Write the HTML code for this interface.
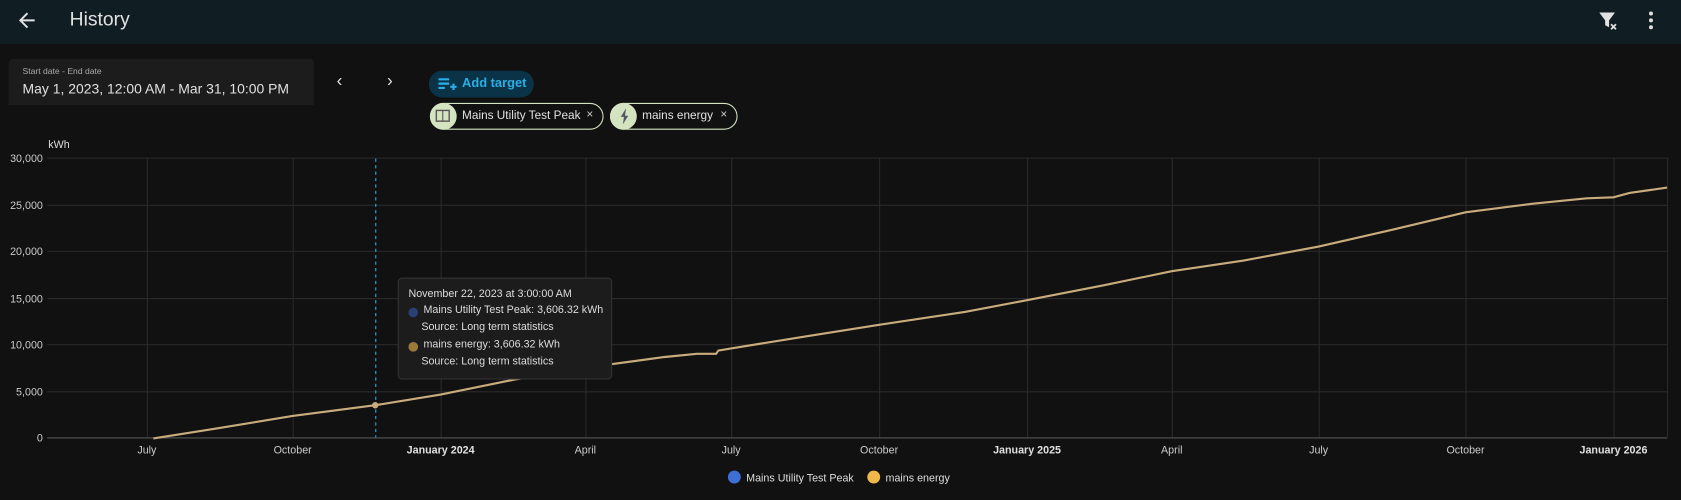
<!DOCTYPE html>
<html><head><meta charset="utf-8"><style>
html,body{margin:0;width:1681px;height:500px;background:#111111;overflow:hidden}
#w{position:absolute;left:0;top:0;width:1568px;height:466px;transform:scale(1.07207);transform-origin:0 0;font-family:"Liberation Sans",sans-serif;color:#e1e1e1}
.top{position:absolute;left:0;top:0;width:1568px;height:41px;background:#101e24}
.t{position:absolute;font-size:18px;color:#e1e1e1}
.abs{position:absolute}
.chip{position:absolute;height:25px;border:1px solid #d4e4c0;border-radius:14px;font-size:11px;color:#e1e1e1;box-sizing:border-box}
.chip .ic{position:absolute;left:-1px;top:-1px;width:25px;height:25px;border-radius:13px;background:#d4e4c0}
</style></head><body><div id="w">
<div class="top"></div>
<svg class="abs" style="left:14px;top:8px" width="22" height="22" viewBox="0 0 24 24"><path d="M20 11H7.8l5.6-5.6L12 4l-8 8 8 8 1.4-1.4L7.8 13H20z" fill="#e1e1e1"/></svg>
<div class="t" style="left:65px;top:8px">History</div>
<svg class="abs" style="left:1489px;top:8px" width="22" height="22" viewBox="0 0 24 24"><path d="M3 4h16l-6 8v7l-4-2v-5z" fill="#e1e1e1"/><path d="M15 16l5 5M20 16l-5 5" stroke="#e1e1e1" stroke-width="1.8"/></svg>
<svg class="abs" style="left:1529px;top:8px" width="22" height="22" viewBox="0 0 24 24"><circle cx="12" cy="5" r="2" fill="#e1e1e1"/><circle cx="12" cy="12" r="2" fill="#e1e1e1"/><circle cx="12" cy="19" r="2" fill="#e1e1e1"/></svg>
<div class="abs" style="left:8px;top:55px;width:285px;height:43px;background:#1c1c1c;border-radius:4px 4px 0 0"></div>
<div class="abs" style="left:21px;top:62px;font-size:8px;color:#aaa">Start date - End date</div>
<div class="abs" style="left:21px;top:75px;font-size:13px;color:#e1e1e1">May 1, 2023, 12:00 AM - Mar 31, 10:00 PM</div>
<div class="abs" style="left:314px;top:67px;font-size:16px;color:#e1e1e1">‹</div>
<div class="abs" style="left:361px;top:67px;font-size:16px;color:#e1e1e1">›</div>
<div class="abs" style="left:400px;top:66px;width:98px;height:25px;border-radius:13px;background:#0b3347"></div>
<svg class="abs" style="left:408px;top:71px" width="18" height="16" viewBox="0 0 18 16"><path d="M1 3h10M1 7h10M1 11h6M12 10h6M15 7v6" stroke="#2aaee6" stroke-width="2"/></svg>
<div class="abs" style="left:431px;top:70px;font-size:12px;font-weight:bold;color:#2aaee6">Add target</div>
<div class="chip" style="left:401px;top:96px;width:162px"><div class="ic"></div><div class="abs" style="left:29px;top:5px">Mains Utility Test Peak</div><div class="abs" style="left:145px;top:4px;color:#ccc">×</div></div>
<svg class="abs" style="left:406px;top:102px" width="14" height="12"><rect x="1" y="1" width="12" height="10" fill="none" stroke="#555" stroke-width="1.3"/><path d="M7 1v10" stroke="#555"/></svg>
<div class="chip" style="left:569px;top:96px;width:119px"><div class="ic"></div><div class="abs" style="left:29px;top:5px">mains energy</div><div class="abs" style="left:102px;top:4px;color:#ccc">×</div></div>
<svg class="abs" style="left:577px;top:101px" width="12" height="15" viewBox="0 0 12 15"><path d="M7 0L2 8h3l-1 7 5-8H6z" fill="#556"/></svg>
<div class="abs" style="left:45px;top:130px;font-size:10px;color:#ddd">kWh</div>
<svg class="abs" style="left:0;top:0" width="1568" height="466">
<g stroke="#2a2a2a" stroke-width="1">
<line x1="44" x2="1555" y1="147.5" y2="147.5"/><line x1="44" x2="1555" y1="191.5" y2="191.5"/><line x1="44" x2="1555" y1="234.5" y2="234.5"/><line x1="44" x2="1555" y1="278.5" y2="278.5"/><line x1="44" x2="1555" y1="321.5" y2="321.5"/><line x1="44" x2="1555" y1="365.5" y2="365.5"/>
<line x1="137.5" x2="137.5" y1="147" y2="408"/><line x1="273.5" x2="273.5" y1="147" y2="408"/><line x1="411.5" x2="411.5" y1="147" y2="408"/><line x1="546.5" x2="546.5" y1="147" y2="408"/><line x1="682.5" x2="682.5" y1="147" y2="408"/><line x1="820.5" x2="820.5" y1="147" y2="408"/><line x1="958.5" x2="958.5" y1="147" y2="408"/><line x1="1093.5" x2="1093.5" y1="147" y2="408"/><line x1="1230.5" x2="1230.5" y1="147" y2="408"/><line x1="1367.5" x2="1367.5" y1="147" y2="408"/><line x1="1505.5" x2="1505.5" y1="147" y2="408"/><line x1="1555.5" x2="1555.5" y1="147" y2="408"/>
</g>
<line x1="44" x2="1555" y1="408.5" y2="408.5" stroke="#555"/>
<line x1="350.5" x2="350.5" y1="148" y2="408" stroke="#2aaee6" stroke-dasharray="3,3"/>
<polyline fill="none" stroke="#c9ac7c" stroke-width="2" points="143,409 200,400 273,388 350,378 411,368 480,354 546,343 620,333 650,330 668,330 670,327 682,325 750,314 820,303 900,291 958,280 1030,266 1093,253 1160,243 1230,230 1300,214 1367,198 1430,190 1480,185 1505,184 1520,180 1555,175"/>
<circle cx="350" cy="378" r="3" fill="#c9ac7c"/>
<g font-size="10" fill="#ccc" text-anchor="end" font-family="Liberation Sans">
<text x="40" y="151">30,000</text><text x="40" y="195">25,000</text><text x="40" y="238">20,000</text><text x="40" y="282">15,000</text><text x="40" y="325">10,000</text><text x="40" y="369">5,000</text><text x="40" y="412">0</text></g>
<g font-size="10" fill="#ccc" text-anchor="middle" font-family="Liberation Sans">
<text x="137" y="423">July</text><text x="273" y="423">October</text><text x="411" y="423" font-weight="bold" fill="#e1e1e1">January 2024</text><text x="546" y="423">April</text><text x="682" y="423">July</text><text x="820" y="423">October</text><text x="958" y="423" font-weight="bold" fill="#e1e1e1">January 2025</text><text x="1093" y="423">April</text><text x="1230" y="423">July</text><text x="1367" y="423">October</text><text x="1505" y="423" font-weight="bold" fill="#e1e1e1">January 2026</text></g>
<circle cx="685" cy="445" r="6" fill="#3e6fd6"/><text x="696" y="449" font-size="10" fill="#ddd" font-family="Liberation Sans">Mains Utility Test Peak</text>
<circle cx="815" cy="445" r="6" fill="#f0b84a"/><text x="826" y="449" font-size="10" fill="#ddd" font-family="Liberation Sans">mains energy</text>
</svg>
<div class="abs" style="left:371px;top:259px;width:198px;height:93px;background:#1c1c1c;border:1px solid #333;border-radius:4px;font-size:10px;color:#ddd;line-height:16px">
<div style="position:absolute;left:9px;top:7px">November 22, 2023 at 3:00:00 AM</div>
<div style="position:absolute;left:9px;top:27px;width:9px;height:9px;border-radius:5px;background:#2c3f75"></div>
<div style="position:absolute;left:23px;top:22px">Mains Utility Test Peak: 3,606.32 kWh</div>
<div style="position:absolute;left:21px;top:38px">Source: Long term statistics</div>
<div style="position:absolute;left:9px;top:59px;width:9px;height:9px;border-radius:5px;background:#9b7a3a"></div>
<div style="position:absolute;left:23px;top:54px">mains energy: 3,606.32 kWh</div>
<div style="position:absolute;left:21px;top:70px">Source: Long term statistics</div>
</div>
</div></body></html>
